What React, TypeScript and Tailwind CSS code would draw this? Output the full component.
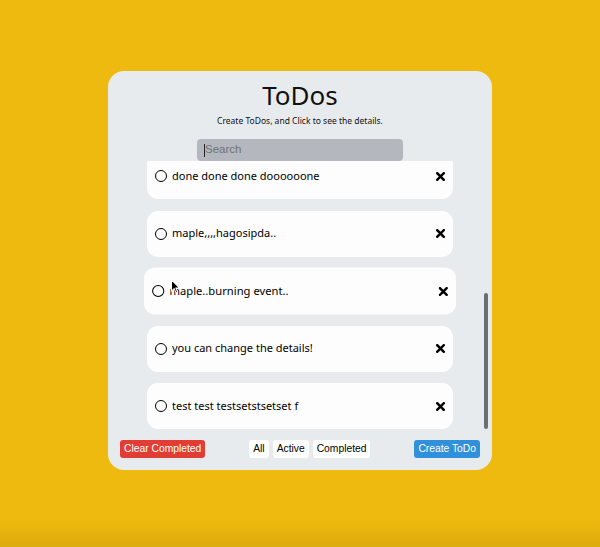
import { useLayoutEffect, useRef } from "react"

const todos = [
  { id: 1, text: "buy some milk" },
  { id: 2, text: "study react hooks" },
  { id: 3, text: "clean my room" },
  { id: 4, text: "hello world" },
  { id: 5, text: "done done done doooooone" },
  { id: 6, text: "maple,,,,hagosipda.." },
  { id: 7, text: "maple..burning event..", hovered: true },
  { id: 8, text: "you can change the details!" },
  { id: 9, text: "test test testsetstsetset f" },
]

function XIcon() {
  return (
    <svg width="9" height="9" viewBox="0 0 9 9" className="shrink-0">
      <path d="M1.2 1.2 L7.8 7.8 M7.8 1.2 L1.2 7.8" stroke="#000" strokeWidth="2.4" strokeLinecap="square" />
    </svg>
  )
}

function Cursor() {
  return (
    <svg width="10" height="15" viewBox="0 0 10 15" className="absolute left-[26px] top-[11px] pointer-events-none">
      <path d="M1 1 L1 12 L3.6 9.6 L5.4 13.6 L7 12.9 L5.3 9 L8.8 9 Z" fill="#000" stroke="#fff" strokeWidth="1" strokeLinejoin="round" />
    </svg>
  )
}

export default function App() {
  const listRef = useRef<HTMLDivElement>(null)

  useLayoutEffect(() => {
    const el = listRef.current
    if (el) el.scrollTop = el.scrollHeight
  }, [])

  return (
    <div className="min-h-screen w-full flex justify-center pt-[71px] bg-[linear-gradient(to_bottom,#efba0f_95%,#dbaa0c)] font-['Noto_Sans',sans-serif]">
      <div className="w-[384px] h-[399px] rounded-[16px] bg-[#e8ebee] flex flex-col">
        <h1 className="mt-[9px] text-center text-[26px] leading-[30px] text-[#111]">ToDos</h1>
        <p className="mt-[4px] text-center text-[8.5px] leading-[14px] text-[#111]">
          Create ToDos, and Click to see the details.
        </p>
        <div className="mx-auto mt-[11px] w-[206px] h-[22px] shrink-0 rounded-[4px] bg-[#b4b7bd] flex items-center px-[7px]">
          <span className="w-px h-[13px] bg-[#222]" />
          <input
            placeholder="Search"
            className="flex-1 min-w-0 bg-transparent text-[11.5px] font-['Liberation_Sans',sans-serif] text-[#333] placeholder:text-[#6e7177] outline-none"
          />
        </div>

        <div className="relative h-[270px] shrink-0">
          <div
            ref={listRef}
            className="h-full overflow-y-auto [scrollbar-width:none] flex flex-col items-center gap-[11.5px] pb-[2px]"
          >
            {todos.map((todo) => (
              <div
                key={todo.id}
                className={`relative w-[306px] h-[46px] shrink-0 rounded-[11px] bg-[#fdfdfe] flex items-center px-2 ${
                  todo.hovered ? "scale-[1.02]" : ""
                }`}
              >
                <span className="w-[12px] h-[12px] rounded-full border-[1.5px] border-black shrink-0" />
                <span className="ml-[5px] flex-1 text-[11px] text-black truncate">{todo.text}</span>
                <XIcon />
                {todo.hovered && <Cursor />}
              </div>
            ))}
          </div>
          <div className="absolute right-[4px] bottom-[2px] w-[4px] h-[136px] rounded-full bg-[#6b6e73]" />
        </div>

        <div className="mt-auto mb-3 px-3 flex items-center justify-between font-['Liberation_Sans',sans-serif] text-[10.3px]">
          <button className="h-[18px] px-[4px] rounded-[3px] bg-[#e23d35] text-white">Clear Completed</button>
          <div className="flex gap-1">
            <button className="h-[18px] px-[4px] rounded-[3px] bg-white text-black">All</button>
            <button className="h-[18px] px-[4px] rounded-[3px] bg-white text-black">Active</button>
            <button className="h-[18px] px-[4px] rounded-[3px] bg-white text-black">Completed</button>
          </div>
          <button className="h-[18px] px-[4px] rounded-[3px] bg-[#3090da] text-white">Create ToDo</button>
        </div>
      </div>
    </div>
  )
}
